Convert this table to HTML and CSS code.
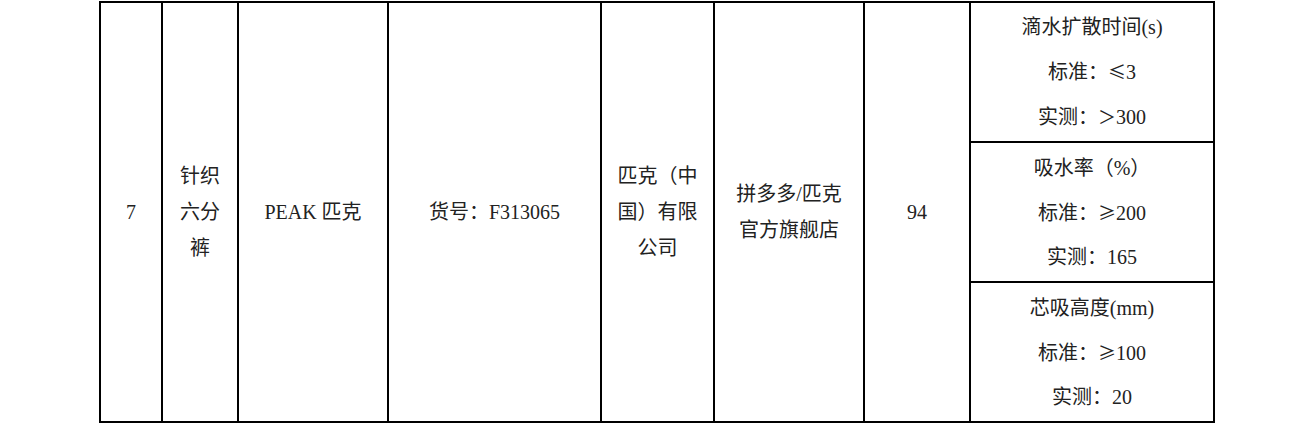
FILE: index.html
```html
<!DOCTYPE html>
<html lang="zh-CN">
<head>
<meta charset="utf-8">
<title>检测结果</title>
<link rel="stylesheet" href="styles.css">
</head>
<body>
<div class="sheet">
  <div class="cell span-all narrow">7</div>
  <div class="cell span-all">针织六分裤</div>
  <div class="cell span-all">PEAK 匹克</div>
  <div class="cell span-all">货号：F313065</div>
  <div class="cell span-all">匹克（中国）有限公司</div>
  <div class="cell span-all">拼多多/匹克官方旗舰店</div>
  <div class="cell span-all">94</div>
  <div class="cell result">
    <div>滴水扩散时间(s)</div>
    <div>标准：<span class="sym">≤</span>3</div>
    <div>实测：<span class="sym">＞</span>300</div>
  </div>
  <div class="cell result">
    <div>吸水率（%）</div>
    <div>标准：<span class="sym">≥</span>200</div>
    <div>实测：165</div>
  </div>
  <div class="cell result">
    <div>芯吸高度(mm)</div>
    <div>标准：<span class="sym">≥</span>100</div>
    <div>实测：20</div>
  </div>
</div>
</body>
</html>
```

FILE: styles.css
```css
html, body {
  margin: 0;
  padding: 0;
  background: #ffffff;
}

body {
  font-family: "Liberation Serif", "Noto Sans CJK SC", serif;
  font-size: 20px;
  color: #222222;
}

.sheet {
  display: grid;
  grid-template-columns: 62px 76px 150px 213px 113px 150px 106px 244px;
  grid-template-rows: 140px 140px 140px;
  width: max-content;
  margin: 1px 0 0 99px;
  border-right: 2px solid #000;
  border-bottom: 2px solid #000;
}

.cell {
  box-sizing: border-box;
  border-left: 2px solid #000;
  border-top: 2px solid #000;
  padding: 0 14px;
  display: flex;
  flex-direction: column;
  align-items: center;
  justify-content: center;
  text-align: center;
  line-height: 36px;
}

.span-all {
  grid-row: 1 / 4;
}

.narrow {
  padding: 0 4px;
}

.result {
  grid-column: 8;
  line-height: 44px;
}

.sym {
  font-family: "Noto Sans CJK SC", sans-serif;
  font-size: 18px;
}
```
